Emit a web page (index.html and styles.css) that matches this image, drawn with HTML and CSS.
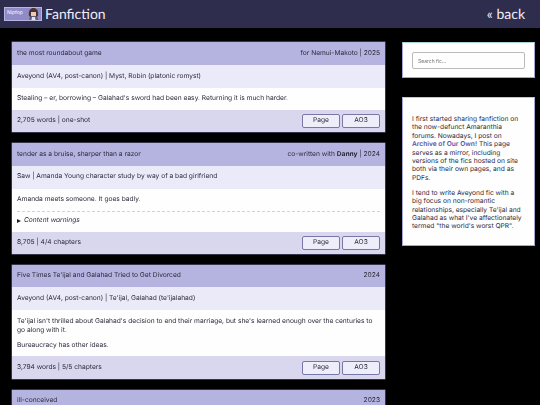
FILE: index.html
```html
<!DOCTYPE html>
<html>
<head>
  <meta charset="UTF-8">
  <link rel="stylesheet" href="styles.css">
</head>
<body>

  <header class="top-bar">
    <div class="brand">
      <div class="badge">
        <span class="badge-text">Nipfop</span>
        <svg class="badge-art" width="15" height="15" viewBox="0 0 15 15">
          <path d="M3 15 L4 9 L11 9 L13 15 Z" fill="#5d5a7a"/>
          <path d="M5 15 L6 10 L9 10 L10 15 Z" fill="#e6e2ea"/>
          <path d="M3 9 C2 3 5 1 7.5 1 C10 1 13 3 12 9 L10 10 L10 6 L5 6 L5 10 Z" fill="#4a3630"/>
          <rect x="5" y="5" width="5" height="4" fill="#ecc9b0"/>
        </svg>
      </div>
      <h1 class="page-title">Fanfiction</h1>
    </div>
    <a class="back-link" href="#">« back</a>
  </header>

  <div class="layout">
    <main class="fic-list">

      <article class="fic">
        <div class="fic-head">
          <span>the most roundabout game</span>
          <span>for Nemui-Makoto | 2025</span>
        </div>
        <div class="fic-meta">Aveyond (AV4, post-canon) | Myst, Robin (platonic romyst)</div>
        <div class="fic-body">
          <p>Stealing – er, borrowing – Galahad's sword had been easy. Returning it is much harder.</p>
        </div>
        <div class="fic-foot">
          <span>2,705 words | one-shot</span>
          <div class="fic-links"><a class="btn" href="#">Page</a><a class="btn" href="#">AO3</a></div>
        </div>
      </article>

      <article class="fic">
        <div class="fic-head">
          <span>tender as a bruise, sharper than a razor</span>
          <span>co-written with <b>Danny</b> | 2024</span>
        </div>
        <div class="fic-meta">Saw | Amanda Young character study by way of a bad girlfriend</div>
        <div class="fic-body">
          <p>Amanda meets someone. It goes badly.</p>
          <div class="warnings"><span class="arrow"></span><i>Content warnings</i></div>
        </div>
        <div class="fic-foot">
          <span>8,705 | 4/4 chapters</span>
          <div class="fic-links"><a class="btn" href="#">Page</a><a class="btn" href="#">AO3</a></div>
        </div>
      </article>

      <article class="fic">
        <div class="fic-head">
          <span>Five Times Te'ijal and Galahad Tried to Get Divorced</span>
          <span>2024</span>
        </div>
        <div class="fic-meta">Aveyond (AV4, post-canon) | Te'ijal, Galahad (te'ijalahad)</div>
        <div class="fic-body">
          <p>Te'ijal isn't thrilled about Galahad's decision to end their marriage, but she's learned enough over the centuries to go along with it.</p>
          <p>Bureaucracy has other ideas.</p>
        </div>
        <div class="fic-foot">
          <span>3,794 words | 5/5 chapters</span>
          <div class="fic-links"><a class="btn" href="#">Page</a><a class="btn" href="#">AO3</a></div>
        </div>
      </article>

      <article class="fic">
        <div class="fic-head">
          <span>ill-conceived</span>
          <span>2023</span>
        </div>
      </article>

    </main>

    <aside class="sidebar">
      <div class="side-box search-box">
        <input class="search" type="text" placeholder="Search fic...">
      </div>
      <div class="side-box about-box">
        <p>I first started sharing fanfiction on the now-defunct Amaranthia forums. Nowadays, I post on <a href="#">Archive of Our Own!</a> This page serves as a mirror, including versions of the fics hosted on site both via their own pages, and as PDFs.</p>
        <p>I tend to write Aveyond fic with a big focus on non-romantic relationships, especially Te'ijal and Galahad as what I've affectionately termed "the world's worst QPR".</p>
      </div>
    </aside>
  </div>

</body>
</html>
```

FILE: styles.css
```css
html, body {
  height: 405px;
  overflow: hidden;
}
body {
  margin: 0;
  background-color: #000;
  font-family: Inter, "Liberation Sans", sans-serif;
  font-size: 6.65px;
  line-height: 9.3px;
  color: #2b2a3a;
  text-rendering: geometricPrecision;
}
p {
  margin: 0;
}

.top-bar {
  height: 28px;
  padding: 0 15px 0 4px;
  display: flex;
  justify-content: space-between;
  align-items: center;
  background-color: #2f2d4e;
  opacity: 0.999;
}
.brand {
  display: flex;
  align-items: center;
  gap: 3px;
}
.badge {
  width: 38px;
  height: 14px;
  box-sizing: border-box;
  padding-left: 2px;
  display: flex;
  justify-content: space-between;
  align-items: center;
  background-color: #8f8bc9;
  border: 1px solid #b8b5e0;
  overflow: hidden;
}
.badge-text {
  font-size: 5px;
  color: #fff;
}
.badge-art {
  flex: none;
}
.page-title {
  margin: 0;
  font-family: Lato, sans-serif;
  font-size: 14px;
  font-weight: normal;
  line-height: 28px;
  color: #eeedf8;
}
.back-link {
  font-family: Lato, sans-serif;
  font-size: 14px;
  color: #eeedf8;
  text-decoration: none;
}

.layout {
  padding: 14px 5px 0 12px;
  display: flex;
  align-items: flex-start;
  gap: 17px;
  opacity: 0.999;
}
.fic-list {
  width: 373px;
  flex: none;
  display: flex;
  flex-direction: column;
  gap: 10.7px;
}
.fic {
  background-color: #fff;
  box-shadow: 0 0 0 0.5px #6d6b95;
}
.fic-head {
  height: 22.7px;
  padding: 0 5px;
  display: flex;
  justify-content: space-between;
  align-items: center;
  background-color: #b6b4e0;
}
.fic-meta {
  height: 23px;
  padding: 0 5px;
  display: flex;
  align-items: center;
  background-color: #ecebfa;
}
.fic-body {
  padding: 6.35px 5px;
  display: flex;
  flex-direction: column;
  gap: 5.4px;
  background-color: #fff;
}
.warnings {
  margin-top: 1px;
  padding-top: 4.4px;
  border-top: 1px dashed #b0e4e0;
  display: flex;
  align-items: center;
}
.arrow {
  width: 0;
  height: 0;
  margin-right: 3px;
  border-left: 4px solid #222;
  border-top: 2.5px solid transparent;
  border-bottom: 2.5px solid transparent;
}
.fic-foot {
  height: 22.5px;
  padding: 0 5px;
  display: flex;
  justify-content: space-between;
  align-items: center;
  background-color: #d9d8ef;
}
.fic-links {
  display: flex;
  gap: 2px;
}
.btn {
  width: 36px;
  height: 12px;
  display: flex;
  justify-content: center;
  align-items: center;
  background-color: #efeefb;
  border: 1px solid #7a78a6;
  border-radius: 2px;
  color: #2b2a3a;
  text-decoration: none;
}

.sidebar {
  width: 133px;
  flex: none;
  display: flex;
  flex-direction: column;
  gap: 19px;
}
.side-box {
  box-sizing: border-box;
  background-color: #fff;
  border: 1px solid #a8a6d6;
  border-top-color: #a9d6d2;
}
.search-box {
  height: 36px;
  padding: 9px;
}
.search {
  width: 100%;
  height: 17px;
  box-sizing: border-box;
  padding: 0 5px;
  border: 1px solid #bbb;
  border-radius: 2px;
  font-family: Inter, sans-serif;
  font-size: 5px;
}
.about-box {
  height: 149px;
  padding: 17px 9px;
  display: flex;
  flex-direction: column;
  gap: 6.6px;
  line-height: 8.4px;
}
.about-box a {
  color: #5a55a8;
  font-weight: 600;
  text-decoration: none;
}
```
